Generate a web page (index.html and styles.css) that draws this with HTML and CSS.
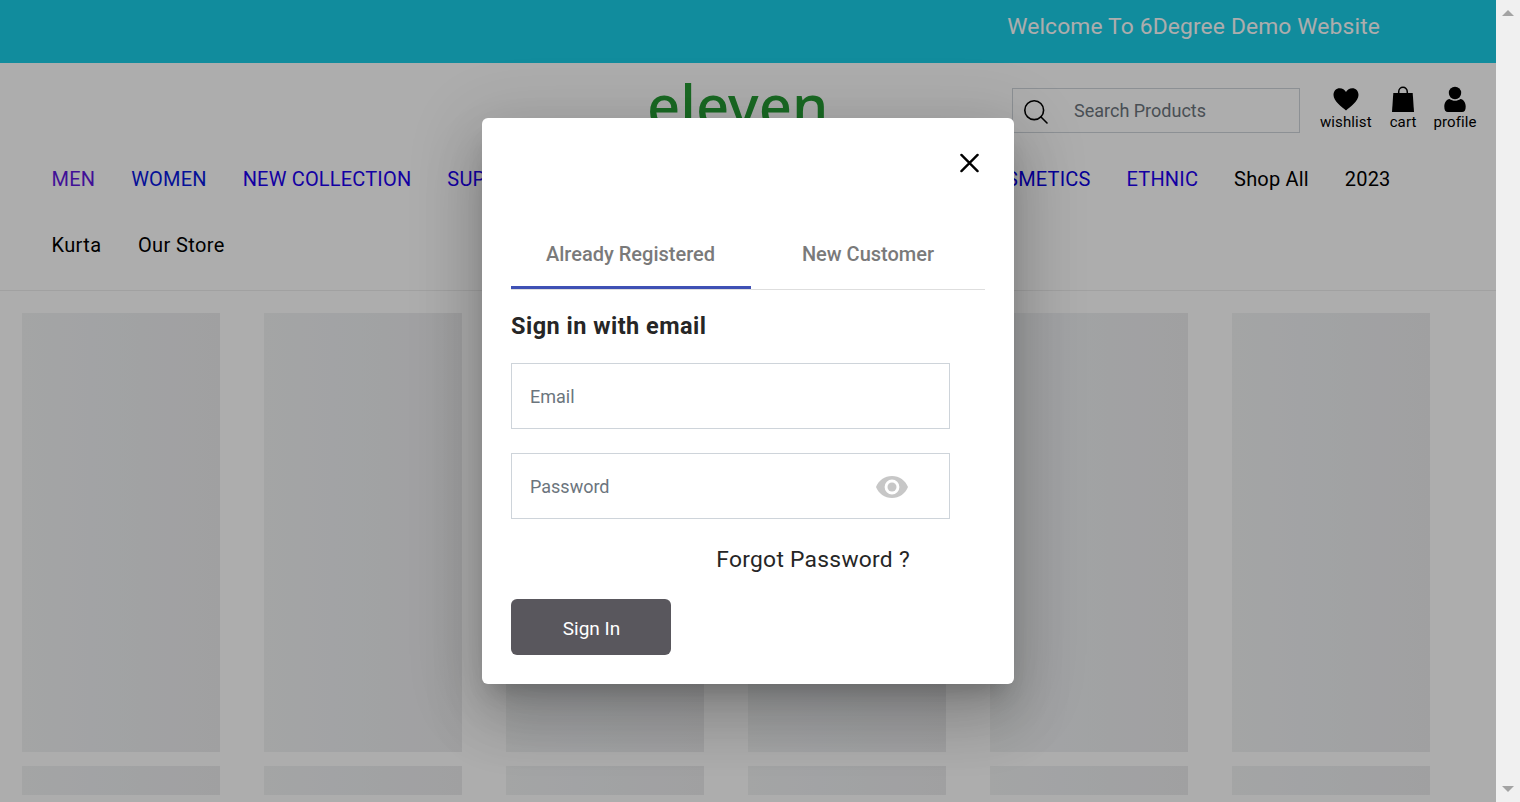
FILE: index.html
```
<!DOCTYPE html>
<html lang="en">
<head>
<meta charset="utf-8">
<title>eleven</title>
<link rel="stylesheet" href="styles.css">
</head>
<body>
<div class="viewport">
  <div class="page">
    <div class="announcement">Welcome To 6Degree Demo Website</div>
    <header class="header">
      <div class="topbar">
        <div class="logo">eleven</div>
        <div class="search">
          <svg class="search-icon" viewBox="0 0 26 26"><circle cx="11.2" cy="11.2" r="9.4"/><path d="M18 18l6 6"/></svg>
          <span>Search Products</span>
        </div>
        <div class="actions">
          <a class="action wishlist"><svg viewBox="0 0 26 26"><path d="M13 24.500C9 21 .5 15.200.5 9 .5 5 3.300 2.300 6.700 2.300c2.800 0 5 1.400 6.300 3.800 1.300-2.400 3.500-3.800 6.300-3.800 3.400 0 6.200 2.700 6.200 6.700C25.500 15.200 17 21 13 24.500z"/></svg><span>wishlist</span></a>
          <a class="action cart"><svg viewBox="0 0 26 26"><path d="M3.300 7h19.400l1.300 19H2z"/><path class="handle" d="M8.700 9V6c0-6.300 8.600-6.300 8.600 0v3"/></svg><span>cart</span></a>
          <a class="action profile"><svg viewBox="0 0 26 26"><circle cx="13" cy="7" r="6.200"/><path d="M7.500 13c3.500 2.400 7.500 2.400 11 0 3 .4 5.200 3.500 5.200 7.500 0 3.800-1.200 5.500-3.700 5.500H6c-2.500 0-3.700-1.700-3.700-5.500 0-4 2.200-7.100 5.200-7.500z"/></svg><span>profile</span></a>
        </div>
      </div>
      <nav class="nav">
        <div class="nav-row">
          <div class="nav-group"><a class="visited">MEN</a><a class="blue">WOMEN</a><a class="indigo">NEW COLLECTION</a><a class="indigo">SUPER SALE</a></div>
          <div class="nav-group"><a class="navy">COSMETICS</a><a class="indigo">ETHNIC</a><a>Shop All</a><a>2023</a></div>
        </div>
        <div class="nav-row">
          <div class="nav-group mixed"><a>Kurta</a><a>Our Store</a></div>
        </div>
      </nav>
    </header>
    <main class="products">
      <div class="card"><div class="photo"></div><div class="line"></div></div>
      <div class="card"><div class="photo"></div><div class="line"></div></div>
      <div class="card"><div class="photo"></div><div class="line"></div></div>
      <div class="card"><div class="photo"></div><div class="line"></div></div>
      <div class="card"><div class="photo"></div><div class="line"></div></div>
      <div class="card"><div class="photo"></div><div class="line"></div></div>
    </main>
    <div class="backdrop">
      <section class="dialog">
        <div class="close"><svg viewBox="0 0 20 20"><path d="M1.500 1.500l17 17M18.500 1.500l-17 17"/></svg></div>
        <div class="tabs">
          <div class="tab active">Already Registered</div>
          <div class="tab">New Customer</div>
        </div>
        <h2 class="title">Sign in with email</h2>
        <div class="field">Email</div>
        <div class="field">Password
          <svg class="eye" viewBox="0 0 32 22"><path fill-rule="evenodd" d="M16 0C8.700 0 2.500 4.500 0 11c2.500 6.500 8.700 11 16 11s13.500-4.500 16-11C29.500 4.500 23.300 0 16 0zm0 18.400a7.400 7.400 0 1 1 0-14.800 7.400 7.400 0 0 1 0 14.800z"/><circle cx="16" cy="11" r="4.500"/></svg>
        </div>
        <div class="forgot">Forgot Password ?</div>
        <div class="submit">Sign In</div>
      </section>
    </div>
  </div>
  <div class="scrollbar">
    <svg viewBox="0 0 12 6"><path d="M0 6l6-6 6 6z"/></svg>
    <svg viewBox="0 0 12 6"><path d="M0 0h12L6 6z"/></svg>
  </div>
</div>
</body>
</html>
```
FILE: styles.css
```
* { box-sizing: border-box; }
body { margin: 0; font-family: Roboto, "Liberation Sans", sans-serif; color: #000; background: #fff; }
.viewport { display: flex; width: 1520px; height: 802px; overflow: hidden; }
.page { position: relative; width: 1496px; height: 802px; overflow: hidden; }
.announcement { height: 63px; padding: 13px 116px 0 0; background: #1acee7; color: #fff; font-size: 22.8px; line-height: 28px; letter-spacing: .15px; text-align: right; white-space: nowrap; }
.header { height: 228px; border-bottom: 1px solid #eee; }
.topbar { display: flex; height: 83px; padding: 0 20px 0 646px; }
.logo { flex: none; width: 366px; padding-top: 6px; padding-left: 1px; font-family: "Noto Sans", sans-serif; font-weight: 500; font-size: 58px; line-height: 72px; color: #259b34; }
.search { display: flex; flex: none; align-items: center; width: 288px; height: 45px; margin-top: 25px; padding-left: 10px; border: 1px solid #ced4da; font-size: 18px; color: #6c757d; }
.search-icon { width: 26px; height: 26px; margin: 3px 25px 0 0; fill: none; stroke: #000; stroke-width: 1.6; stroke-linecap: round; }
.actions { display: flex; flex: none; gap: 18px; margin: 23px 0 0 20px; }
.action { display: flex; flex-direction: column; align-items: center; font-size: 15px; line-height: 20px; letter-spacing: .1px; }
.profile { margin-left: -1px; }
.action svg { width: 26px; height: 26px; }
.handle { fill: none; stroke: #000; stroke-width: 1.5; }
.nav { padding-left: 51.5px; }
.nav-row { display: flex; justify-content: space-between; width: 1339px; height: 66px; line-height: 67px; }
.nav-group { display: flex; gap: 36px; font-size: 20px; letter-spacing: .18px; white-space: nowrap; }
.mixed { gap: 36.5px; letter-spacing: .38px; }
.visited { color: #6019df; }
.blue { color: #0818e0; }
.indigo { color: #1c00f0; }
.navy { color: #0b00e0; }
.products { display: flex; gap: 44px; padding: 22px 0 0 22px; }
.card { display: flex; flex: none; flex-direction: column; gap: 14px; width: 198px; }
.photo, .line { height: 439px; background: linear-gradient(90deg, #f2f3f3, #eff1f3 35%, #ececee); }
.line { height: 29px; }
.backdrop { position: absolute; inset: 0; display: flex; align-items: center; justify-content: center; background: rgba(0, 0, 0, .32); }
.dialog { width: 532px; height: 566px; padding: 35px 29px 29px; border-radius: 6px; background: #fff; color: #262626; box-shadow: 0 16px 22px -10px rgba(0,0,0,.2), 0 36px 57px 4px rgba(0,0,0,.14), 0 13px 69px 12px rgba(0,0,0,.12); }
.close { display: flex; justify-content: flex-end; height: 64px; padding: 0 6px 0 0; }
.close svg { width: 19px; height: 20px; fill: none; stroke: #000; stroke-width: 2.5; stroke-linecap: round; }
.tabs { display: flex; height: 73px; border-bottom: 1px solid #dedede; }
.tab { display: flex; align-items: center; justify-content: center; width: 234px; height: 72px; padding-top: 2px; font-size: 20px; font-weight: 500; color: #7a7a7a; }
.tab.active { width: 240px; padding-top: 5px; padding-right: 1px; border-bottom: 3px solid #3f51b5; }
.title { margin: 19px 0; padding: 1px 0 2px; font-size: 23.5px; line-height: 32px; font-weight: 700; letter-spacing: .48px; }
.field { display: flex; align-items: center; justify-content: space-between; width: 439px; height: 66px; margin-bottom: 24px; padding: 0 41px 0 18px; border: 1px solid #ced4da; font-size: 18px; color: #6c757d; }
.eye { width: 32px; height: 22px; margin-top: 2px; fill: #c7c7c7; }
.forgot { width: 399px; height: 56px; padding-top: 3px; font-size: 22.8px; line-height: 28px; letter-spacing: .28px; text-align: right; }
.submit { display: flex; align-items: center; justify-content: center; width: 160px; height: 56px; padding-top: 3px; padding-left: 1px; border-radius: 6px; background: #59575d; color: #fff; font-size: 19px; }
.scrollbar { display: flex; flex-direction: column; justify-content: space-between; align-items: center; width: 24px; padding: 10px 0; background: #f0f0f0; }
.scrollbar svg { width: 12px; height: 6px; fill: #a3a3a3; }
```
